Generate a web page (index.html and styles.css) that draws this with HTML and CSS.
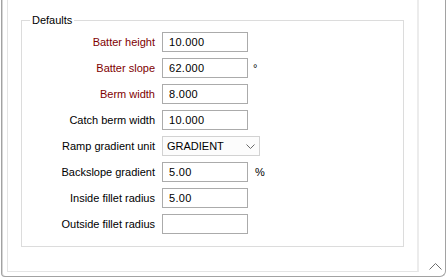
FILE: index.html
```html
<!DOCTYPE html>
<html lang="en">
<head>
  <meta charset="UTF-8" />
  <title>Defaults</title>
  <link rel="stylesheet" href="styles.css">
</head>
<body>

  <div class="frame">
    <div class="panel">
      <fieldset class="group">
        <legend>Defaults</legend>

        <div class="rows">
          <!-- Batter -->
          <label class="req" for="batter-height">Batter height</label>
          <input class="field" type="text" id="batter-height" value="10.000" />
          <span class="unit"></span>

          <label class="req" for="batter-slope">Batter slope</label>
          <input class="field" type="text" id="batter-slope" value="62.000" />
          <span class="unit">°</span>

          <!-- Berm -->
          <label class="req" for="berm-width">Berm width</label>
          <input class="field" type="text" id="berm-width" value="8.000" />
          <span class="unit"></span>

          <label for="catch-berm">Catch berm width</label>
          <input class="field" type="text" id="catch-berm" value="10.000" />
          <span class="unit"></span>

          <!-- Ramp -->
          <label for="ramp-unit">Ramp gradient unit</label>
          <div class="combo" id="ramp-unit">
            <span>GRADIENT</span>
            <svg width="9" height="5" viewBox="0 0 9 5"><polyline points="0.5,0.5 4.5,4.5 8.5,0.5" fill="none" stroke="#6a6a6a" stroke-width="1"/></svg>
          </div>

          <label for="backslope">Backslope gradient</label>
          <input class="field" type="text" id="backslope" value="5.00" />
          <span class="unit pct">%</span>

          <!-- Fillets -->
          <label for="inside-fillet">Inside fillet radius</label>
          <input class="field" type="text" id="inside-fillet" value="5.00" />
          <span class="unit"></span>

          <label for="outside-fillet">Outside fillet radius</label>
          <input class="field" type="text" id="outside-fillet" value="" />
          <span class="unit"></span>
        </div>
      </fieldset>
    </div>

    <div class="side">
      <svg width="13" height="7" viewBox="0 0 13 7"><polyline points="0.5,6.5 6.5,0.5 12.5,6.5" fill="none" stroke="#6e6e6e" stroke-width="1"/></svg>
    </div>
  </div>

</body>
</html>
```

FILE: styles.css
```css
body {
  margin: 0;
  background-color: #fff;
  font-family: 'Liberation Sans', Arial, sans-serif;
  font-size: 11px;
  color: #000;
  width: 446px;
  height: 279px;
  overflow: hidden;
}

.frame {
  margin-left: 1px;
  width: 445px;
  height: 277px;
  box-sizing: border-box;
  border: 1px solid #a2a2a2;
  border-top: none;
  border-radius: 0 0 6px 4px;
  box-shadow: inset 1px 0 0 #d6d6d6;
  display: flex;
}

.panel {
  margin-left: 5px;
  width: 412px;
  height: 272px;
  box-sizing: border-box;
  border: 1px solid #e4e4e4;
  border-top: none;
  border-right: 2px solid #ececec;
  flex-shrink: 0;
}

.group {
  margin: 14px 0 0 13px;
  width: 383px;
  box-sizing: border-box;
  border: 1px solid #dcdcdc;
  padding: 5px 0 12px 0;
  min-width: 0;
}

.group legend {
  margin-left: 8px;
  padding: 0 2px;
  line-height: 13px;
}

.rows {
  display: grid;
  grid-template-columns: 133px 86px auto;
  grid-auto-rows: 20px;
  column-gap: 7px;
  row-gap: 6px;
}

.rows label {
  text-align: right;
  align-self: center;
  white-space: nowrap;
}

.rows label.req {
  color: #800000;
}

.field {
  width: 86px;
  height: 20px;
  box-sizing: border-box;
  border: 1px solid #ababab;
  padding: 0 0 0 6px;
  margin: 0;
  font-family: inherit;
  font-size: 11px;
  letter-spacing: 0.3px;
  color: #000;
  background-color: #fff;
  outline: none;
}

.unit {
  align-self: center;
  margin-left: -2px;
}

.unit.pct {
  margin-left: 0;
}

.combo {
  grid-column: 2 / 4;
  width: 98px;
  height: 20px;
  box-sizing: border-box;
  border: 1px solid #d2d2d2;
  background-color: #fcfcfc;
  padding: 0 4px 0 4px;
  display: flex;
  align-items: center;
  justify-content: space-between;
}

.side {
  flex: 1;
  display: flex;
  align-items: flex-end;
  justify-content: flex-end;
  padding: 0 3px 6px 0;
}
```
